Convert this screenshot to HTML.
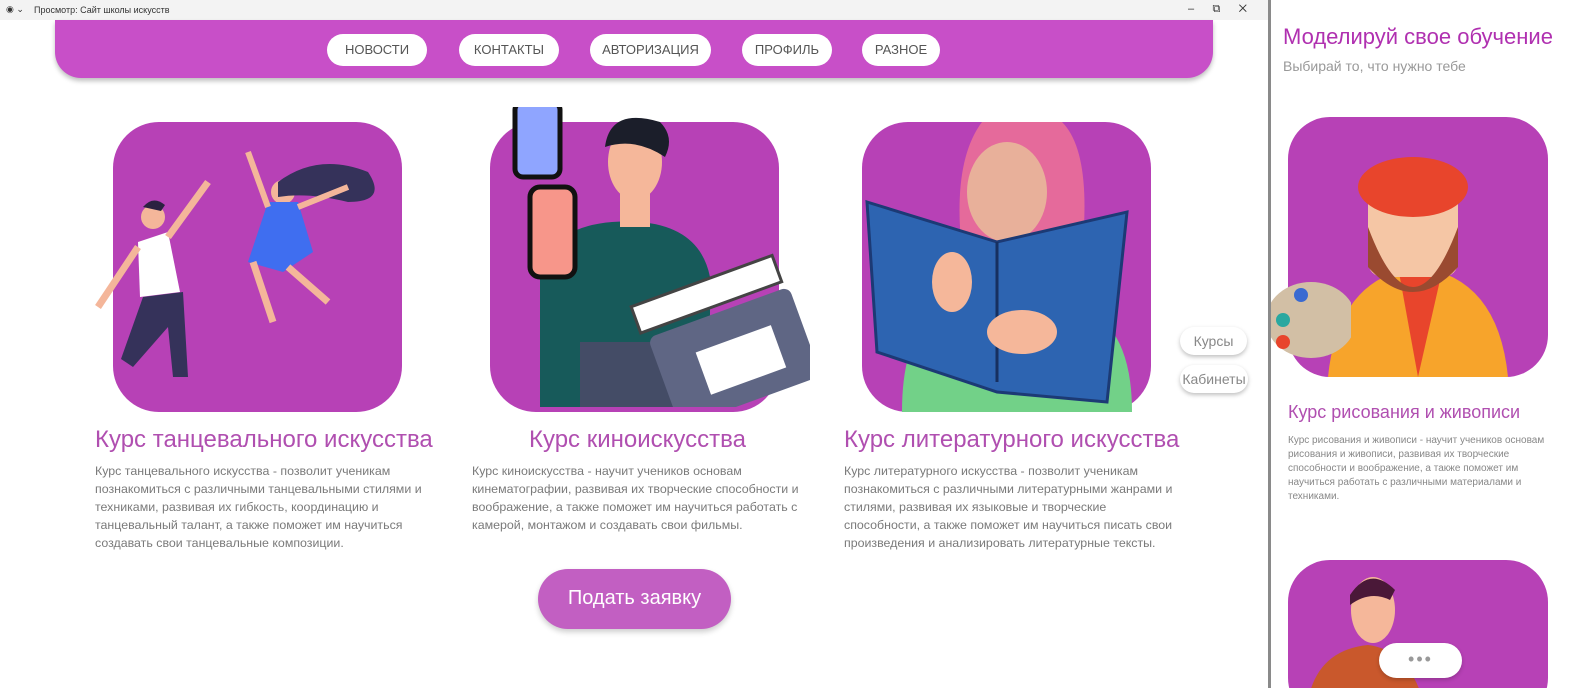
<!DOCTYPE html>
<html><head><meta charset="utf-8"><style>
*{margin:0;padding:0;box-sizing:border-box}
html,body{width:1582px;height:688px;overflow:hidden}
body{background:#fff;font-family:"Liberation Sans",sans-serif;position:relative}
.tb{position:absolute;left:0;top:0;width:1268px;height:20px;background:#f3f3f3;font-size:9px;color:#333}
.nav{position:absolute;left:55px;top:20px;width:1158px;height:58px;background:#c84fc8;border-radius:0 0 26px 26px;box-shadow:0 3px 5px rgba(0,0,0,.25)}
.pill{position:absolute;top:14px;height:32px;background:#fff;border-radius:16px;font-size:13px;color:#555;text-align:center;line-height:32px}
.card{position:absolute;top:122px;width:289px;height:290px;background:#b741b6;border-radius:46px;overflow:visible}
.h{position:absolute;font-size:24px;color:#b04fb0;white-space:nowrap}
.p{position:absolute;font-size:12.4px;line-height:18px;color:#7a7a7a}
.side{position:absolute;left:1268px;top:0;width:314px;height:688px;background:#fff;border-left:3px solid #8a8a8a;overflow:hidden}
.sp{position:absolute;width:67px;height:28px;border-radius:14px;background:#fff;box-shadow:0 2px 4px rgba(0,0,0,.25);font-size:14px;color:#888;text-align:center;line-height:28px}
</style></head><body>
<div class="tb"><span style="position:absolute;left:6px;top:4px">◉ ⌄</span><span style="position:absolute;left:34px;top:5px">Просмотр: Сайт школы искусств</span><span style="position:absolute;left:1188px;top:3px;font-size:11px">–&nbsp;&nbsp;&nbsp;&nbsp;&nbsp;&nbsp;⧉&nbsp;&nbsp;&nbsp;&nbsp;&nbsp;&nbsp;✕</span></div>
<div class="nav">
<div class="pill" style="left:272px;width:100px">НОВОСТИ</div>
<div class="pill" style="left:404px;width:100px">КОНТАКТЫ</div>
<div class="pill" style="left:535px;width:121px">АВТОРИЗАЦИЯ</div>
<div class="pill" style="left:687px;width:90px">ПРОФИЛЬ</div>
<div class="pill" style="left:807px;width:78px">РАЗНОЕ</div>
</div>

<div class="card" style="left:113px">
<svg width="320" height="290" style="position:absolute;left:-30px;top:0" viewBox="0 0 320 290">
<circle cx="70" cy="95" r="12" fill="#f4b69a"/><path d="M60 85 q10 -12 22 -2 l-4 6z" fill="#2b2140"/>
<path d="M55 120 l30 -10 l12 60 l-40 5z" fill="#fff"/><path d="M60 175 l40 -5 l5 85 l-15 0 l-5 -50 l-35 40 l-12 -8z" fill="#35325a"/>
<path d="M85 115 l40 -55" stroke="#f4b69a" stroke-width="7"/><path d="M55 125 l-40 60" stroke="#f4b69a" stroke-width="7"/>
<circle cx="200" cy="70" r="12" fill="#f4b69a"/><path d="M195 60 q40 -30 90 -10 q20 30 -20 30 q-40 -10 -70 -5z" fill="#35325a"/>
<path d="M185 80 l30 0 l15 50 l-30 20 l-35 -10z" fill="#3f6ef0"/><path d="M170 140 l20 60 M205 145 l40 35" stroke="#f4b69a" stroke-width="7"/>
<path d="M185 85 l-20 -55 M215 85 l50 -20" stroke="#f4b69a" stroke-width="6"/>
</svg></div>
<div class="card" style="left:490px">
<svg width="320" height="300" style="position:absolute;left:0;top:-15px" viewBox="0 0 320 300">
<path d="M50 160 q20 -50 100 -45 q60 5 70 55 l0 140 l-170 0z" fill="#175a5a"/>
<path d="M90 305 l0 -70 l110 0 l0 70z" fill="#444c66"/>
<ellipse cx="145" cy="55" rx="27" ry="38" fill="#f5b79a"/><path d="M115 40 q5 -40 55 -25 q15 15 5 35 q-30 -20 -60 -10z" fill="#1b1e2a"/>
<rect x="130" y="85" width="30" height="35" fill="#f5b79a"/>
<rect x="25" y="-5" width="45" height="75" rx="8" fill="#8fa5ff" stroke="#111" stroke-width="5"/>
<rect x="40" y="80" width="45" height="90" rx="10" fill="#f7968a" stroke="#111" stroke-width="5"/>
<g transform="rotate(-20 230 210)"><rect x="155" y="205" width="150" height="95" rx="8" fill="#5f6684"/><rect x="195" y="235" width="80" height="45" fill="#fff"/><rect x="150" y="170" width="150" height="28" fill="#fff" stroke="#444" stroke-width="3"/></g>
</svg></div>
<div class="card" style="left:862px">
<svg width="300" height="290" style="position:absolute;left:0;top:0" viewBox="0 0 300 290">
<path d="M120 0 q-30 40 -20 130 l120 0 q10 -100 -20 -130z" fill="#e56a9b"/>
<ellipse cx="145" cy="70" rx="40" ry="50" fill="#e8b09a"/>
<path d="M40 290 q0 -100 60 -110 l100 0 q70 10 70 110z" fill="#72d188"/>
<path d="M5 80 l130 40 l130 -30 l-20 190 l-110 -10 l-120 -40z" fill="#2d64b1" stroke="#1c3a75" stroke-width="3"/>
<path d="M135 120 l0 140" stroke="#173060" stroke-width="3"/>
<ellipse cx="90" cy="160" rx="20" ry="30" fill="#f5b79a"/><ellipse cx="160" cy="210" rx="35" ry="22" fill="#f5b79a"/>
</svg></div>

<div class="h" style="left:95px;top:426px">Курс танцевального искусства</div>
<div class="p" style="left:95px;top:462px;width:340px">Курс танцевального искусства - позволит ученикам познакомиться с различными танцевальными стилями и техниками, развивая их гибкость, координацию и танцевальный талант, а также поможет им научиться создавать свои танцевальные композиции.</div>
<div class="h" style="left:529px;top:426px">Курс киноискусства</div>
<div class="p" style="left:472px;top:462px;width:340px">Курс киноискусства - научит учеников основам кинематографии, развивая их творческие способности и воображение, а также поможет им научиться работать с камерой, монтажом и создавать свои фильмы.</div>
<div class="h" style="left:844px;top:426px">Курс литературного искусства</div>
<div class="p" style="left:844px;top:462px;width:335px">Курс литературного искусства - позволит ученикам познакомиться с различными литературными жанрами и стилями, развивая их языковые и творческие способности, а также поможет им научиться писать свои произведения и анализировать литературные тексты.</div>

<div style="position:absolute;left:538px;top:569px;width:193px;height:60px;border-radius:30px;background:#c25fc2;box-shadow:0 3px 6px rgba(0,0,0,.2);color:#fff;font-size:20px;text-align:center;line-height:58px">Подать заявку</div>

<div class="sp" style="left:1180px;top:327px">Курсы</div>
<div class="sp" style="left:1180px;top:365px;width:68px">Кабинеты</div>

<div class="side">
<div style="position:absolute;left:12px;top:24px;font-size:22px;color:#b030b0;white-space:nowrap">Моделируй свое обучение</div>
<div style="position:absolute;left:12px;top:58px;font-size:14px;color:#999">Выбирай то, что нужно тебе</div>
<div style="position:absolute;left:17px;top:117px;width:260px;height:260px;background:#b741b6;border-radius:42px;overflow:hidden">
<svg width="260" height="260" viewBox="0 0 260 260">
<path d="M40 260 q10 -100 90 -110 q80 10 90 110z" fill="#f7a42b"/><path d="M110 150 l20 110 l25 -110z" fill="#e8452c"/>
<rect x="80" y="70" width="90" height="90" rx="15" fill="#f5c6a5"/><path d="M80 110 q45 120 90 0 l0 40 q-45 50 -90 0z" fill="#9a4a30"/>
<ellipse cx="125" cy="70" rx="55" ry="30" fill="#e8452c"/>
</svg></div>
<svg width="80" height="140" style="position:absolute;left:0;top:260px" viewBox="0 0 80 140"><ellipse cx="40" cy="60" rx="45" ry="38" fill="#d2bfa5"/><circle cx="12" cy="60" r="7" fill="#2aa8a0"/><circle cx="30" cy="35" r="7" fill="#3a6ad1"/><circle cx="12" cy="82" r="7" fill="#e8452c"/></svg>
<div style="position:absolute;left:17px;top:402px;font-size:18px;color:#b04fb0;white-space:nowrap">Курс рисования и живописи</div>
<div style="position:absolute;left:17px;top:434px;width:270px;font-size:10px;line-height:14px;color:#888">Курс рисования и живописи - научит учеников основам рисования и живописи, развивая их творческие способности и воображение, а также поможет им научиться работать с различными материалами и техниками.</div>
<div style="position:absolute;left:17px;top:560px;width:260px;height:160px;background:#b741b6;border-radius:42px;overflow:hidden">
<svg width="260" height="140" viewBox="0 0 260 140"><path d="M20 140 q10 -50 60 -55 q40 5 55 55z" fill="#c9582c"/><ellipse cx="85" cy="50" rx="22" ry="33" fill="#f5b79a"/><path d="M62 35 q20 -30 45 -5 l-5 10 q-20 -10 -40 5z" fill="#4a1838"/></svg></div>
<div style="position:absolute;left:108px;top:643px;width:83px;height:35px;border-radius:18px;background:#fff;box-shadow:0 2px 4px rgba(0,0,0,.2);text-align:center;line-height:33px;color:#999;font-size:18px;letter-spacing:2px">•••</div>
</div>
</body></html>
